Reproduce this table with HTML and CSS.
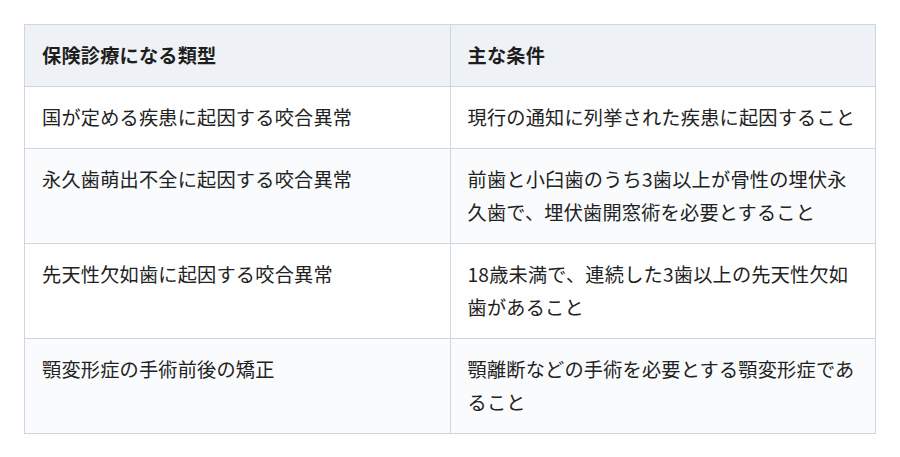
FILE: index.html
```html
<!DOCTYPE html>
<html lang="ja">
<head>
<meta charset="utf-8">
<link rel="stylesheet" href="styles.css">
</head>
<body>
<div class="wrap">
<table class="tbl">
<thead>
<tr><th>保険診療になる類型</th><th>主な条件</th></tr>
</thead>
<tbody>
<tr><td>国が定める疾患に起因する咬合異常</td><td>現行の通知に列挙された疾患に起因すること</td></tr>
<tr><td>永久歯萌出不全に起因する咬合異常</td><td>前歯と小臼歯のうち3歯以上が骨性の埋伏永久歯で、埋伏歯開窓術を必要とすること</td></tr>
<tr><td>先天性欠如歯に起因する咬合異常</td><td>18歳未満で、連続した3歯以上の先天性欠如歯があること</td></tr>
<tr><td>顎変形症の手術前後の矯正</td><td>顎離断などの手術を必要とする顎変形症であること</td></tr>
</tbody>
</table>
</div>
</body>
</html>
```

FILE: styles.css
```css
html, body {
  margin: 0;
  padding: 0;
  background: #ffffff;
}
body {
  font-family: "Noto Sans CJK JP", "Noto Sans", sans-serif;
  color: #222222;
}
.wrap {
  padding: 24px;
}
.tbl {
  width: 100%;
  border-collapse: collapse;
  table-layout: fixed;
  font-size: 19.2px;
  line-height: 1.72;
  letter-spacing: 0.2px;
}
.tbl th, .tbl td {
  border: 1px solid #cfd6de;
  padding: 14px 17px;
  text-align: left;
  vertical-align: top;
}
.tbl th {
  background: #eef2f6;
  font-weight: 700;
  color: #1e1e1e;
}
.tbl td {
  font-weight: 400;
}
.tbl tbody tr:nth-child(even) td {
  background: #f9fbfc;
}
```
